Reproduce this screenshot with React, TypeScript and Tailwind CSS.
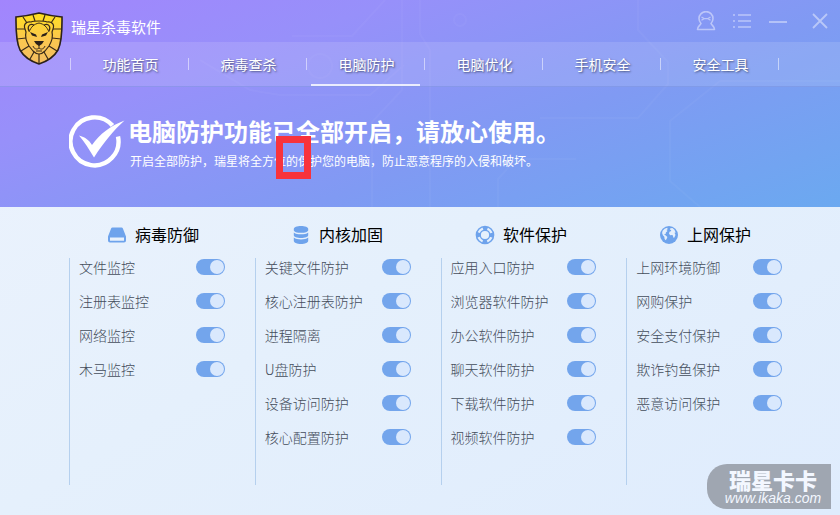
import type { ReactNode } from "react";

const navItems = ["功能首页", "病毒查杀", "电脑防护", "电脑优化", "手机安全", "安全工具"];
const activeItem = "电脑防护";

type Group = { title: string; icon: ReactNode; items: string[] };

function DriveIcon() {
  return (
    <svg viewBox="0 0 18 16" className="h-4 w-[18px]" fill="#6ea3ec" aria-hidden="true">
      <path
        fillRule="evenodd"
        d="M4.5 0.5h9a1.5 1.5 0 0 1 1.4 1L18 9.5v4a2 2 0 0 1-2 2H2a2 2 0 0 1-2-2v-4l3.1-8a1.5 1.5 0 0 1 1.4-1ZM2 10.6v3.2h14v-3.2Z"
      />
    </svg>
  );
}

function DatabaseIcon() {
  return (
    <svg viewBox="0 0 16 18" className="h-[18px] w-4" fill="#6ea3ec" aria-hidden="true">
      <path d="M.8 3C.8 1.200 4 0 8 0s7.200 1.200 7.200 3v1.200C15.200 5.800 12 6.800 8 6.800S.8 5.800.8 4.200Z" />
      <path d="M.8 6.400C2.500 7.800 5 8.300 8 8.300s5.500-.5 7.200-1.900v2.800c0 1.700-3.200 2.700-7.200 2.700S.8 10.900.8 9.200Z" />
      <path d="M.8 11.500c1.700 1.400 4.200 1.900 7.200 1.900s5.500-.5 7.200-1.900v3.200C15.200 16.600 12 18 8 18S.8 16.600.8 14.700Z" />
    </svg>
  );
}

function LifebuoyIcon() {
  return (
    <svg viewBox="0 0 20 20" className="size-5" fill="none" stroke="#6ea3ec" aria-hidden="true">
      <circle cx="10" cy="10" r="8.600" strokeWidth="1.500" />
      <circle cx="10" cy="10" r="4.800" strokeWidth="1.400" />
      <circle cx="10" cy="10" r="6.700" strokeWidth="3.600" strokeDasharray="4.600 5.924" strokeDashoffset="2.300" />
    </svg>
  );
}

function GlobeIcon() {
  return (
    <svg viewBox="0 0 18 18" className="size-[18px]" aria-hidden="true">
      <circle cx="9" cy="9" r="9" fill="#6ea3ec" />
      <g fill="#e4effc">
        <path d="M2.600 4.800 4.600 2.800l2.600-1 .5 1.400-1.200.8 1 1-1.600 1.400-.3 1.500-1.600.6 1.800 1.100 1.600 1.300-.8 2-1 1.300-1-1.200-.3-2.200-1.400-1.600-.8-2.200Z" />
        <path d="m10.400 2.200 2-.2 2 1.800 1.300 2.600-1.200.4 1 2.200-1.300 2.800-1-.4-.2-1.800-1.200-.6-1.500.3-1.300-1.600.5-2 1.700-.8-.2-1-1.200-.3Z" />
      </g>
    </svg>
  );
}

const groups: Group[] = [
  { title: "病毒防御", icon: <DriveIcon />, items: ["文件监控", "注册表监控", "网络监控", "木马监控"] },
  {
    title: "内核加固",
    icon: <DatabaseIcon />,
    items: ["关键文件防护", "核心注册表防护", "进程隔离", "U盘防护", "设备访问防护", "核心配置防护"],
  },
  {
    title: "软件保护",
    icon: <LifebuoyIcon />,
    items: ["应用入口防护", "浏览器软件防护", "办公软件防护", "聊天软件防护", "下载软件防护", "视频软件防护"],
  },
  {
    title: "上网保护",
    icon: <GlobeIcon />,
    items: ["上网环境防御", "网购保护", "安全支付保护", "欺诈钓鱼保护", "恶意访问保护"],
  },
];

function LionShield() {
  return (
    <svg viewBox="0 0 48 53" className="h-[53px] w-12" aria-hidden="true">
      <defs>
        <linearGradient id="gold" x1="0" y1="0" x2="0" y2="1">
          <stop offset="0" stopColor="#ffe01f" />
          <stop offset=".5" stopColor="#fbc84e" />
          <stop offset="1" stopColor="#f3bd63" />
        </linearGradient>
      </defs>
      <path
        d="M1 5Q12 4 24 1q12 3 23 4c.2 14 0 25-4 33-4 7-10 11-19 14C15 49 9 45 5 38 1 30 .8 19 1 5Z"
        fill="url(#gold)"
        stroke="#2b2118"
        strokeWidth="1.600"
      />
      <g fill="none" stroke="#3a2b18" strokeWidth="1.200" strokeLinejoin="round">
        <path d="M16 10c2-1 5-1 8-1s6 0 8 1c4-1 8 2 6 7l-1 3c1 4 0 9-3 14l-4 5c-2 2-4 3-6 3s-4-1-6-3l-4-5c-3-5-4-10-3-14l-1-3c-2-5 2-8 6-7Z" />
        <path d="M20 9 18 3M28 9l2-6M12 11 8 5M36 11l4-6M10 17H1M38 17h9M11 26l-9 1M37 26l9 1M14 34l-8 5M34 34l8 5M19 40l-4 7M29 40l4 7M24 42v9" />
        <path d="M19 13c-5-2-7 2-5 6M29 13c5-2 7 2 5 6" />
        <path d="M14 20c2-5 5-8 10-9 5 1 8 4 10 9" strokeWidth="1" />
        <path d="M24 33v3M18 34c1 3 4 4 6 2 2 2 5 1 6-2M21 39h6" strokeWidth="1" />
      </g>
      <path d="m15 20 6 2.500 1 2.500-5-1.500ZM33 20l-6 2.500-1 2.500 5-1.500ZM19 29h10l-2 3-3 2-3-2Z" fill="#2b2118" />
    </svg>
  );
}

function CheckBadge() {
  return (
    <svg viewBox="0 0 56 54" className="h-[54px] w-14 shrink-0" aria-hidden="true">
      <path d="M43.500 10.500A24 24 0 1 0 49 21.500" fill="none" stroke="#fff" strokeWidth="4.400" />
      <path d="M10 20.500c6 1.500 10 4.500 13 9.500 8-11 18-19 32.500-24.500C45 15 35 27 25 42.500 20 34 15.500 27 10 20.500Z" fill="#fff" />
    </svg>
  );
}

function CircuitLines() {
  return (
    <svg
      viewBox="0 0 840 207"
      preserveAspectRatio="xMidYMid slice"
      className="pointer-events-none absolute inset-0 size-full"
      fill="none"
      stroke="#fff"
      strokeOpacity=".035"
      strokeWidth="2"
      aria-hidden="true"
    >
      <path d="M402 0v90l-30 32v85M420 0v34l10 16v157M385 0 352 36h-60M638 0v30l30 32v22l-30 34H540M200 60l50 30 30 5h90l34-30M700 207l-30-26v-60l50-40h120M498 207v-28l18-20h60" />
      <circle cx="460" cy="20" r="6" />
      <circle cx="320" cy="66" r="12" />
    </svg>
  );
}

function WindowControls() {
  const button = "flex h-6 w-6 items-center justify-center text-white/45 hover:text-white";
  return (
    <div className="flex items-center gap-3">
      <button type="button" aria-label="用户" className={button}>
        <svg viewBox="0 0 20 20" className="size-5" fill="none" stroke="currentColor" strokeWidth="1.600">
          <path d="M5 12.500A7 7 0 1 1 15 12.500C16 14.500 18.500 15.500 18.500 18.500H1.500C1.500 15.500 4 14.500 5 12.500Z" strokeLinejoin="round" />
          <path d="M5.500 6 8 7.600h4L14.500 6M5.500 9.200 8 7.600M14.500 9.200 12 7.600" strokeWidth="1.300" />
        </svg>
      </button>
      <button type="button" aria-label="菜单" className={button}>
        <svg viewBox="0 0 20 16" className="h-4 w-5" fill="none" stroke="currentColor" strokeWidth="1.600">
          <path d="M1 2h2M6 2h13M1 8h2M6 8h13M1 14h2M6 14h13" />
        </svg>
      </button>
      <button type="button" aria-label="最小化" className={button}>
        <svg viewBox="0 0 20 20" className="size-5" stroke="currentColor" strokeWidth="1.800">
          <path d="M1 11h18" />
        </svg>
      </button>
      <button type="button" aria-label="关闭" className={`${button} ml-1.5`}>
        <svg viewBox="0 0 18 18" className="size-[18px]" stroke="currentColor" strokeWidth="1.800">
          <path d="m2 2 14 14M16 2 2 16" />
        </svg>
      </button>
    </div>
  );
}

function SwitchRow({ id, label }: { id: string; label: string }) {
  return (
    <li className="flex h-[34px] items-start justify-between">
      <label htmlFor={id} className="text-sm leading-[18px] font-light text-[#444d5b]">
        {label}
      </label>
      <input
        id={id}
        type="checkbox"
        defaultChecked
        className="relative mt-px h-4 w-[29px] shrink-0 appearance-none rounded-full bg-[#a9b8cc] before:absolute before:top-px before:left-px before:size-3.5 before:rounded-full before:bg-[#d9e8fd] checked:bg-[#73a5ec] checked:before:left-3.5"
      />
    </li>
  );
}

export default function App() {
  return (
    <div className="relative flex min-h-screen flex-col bg-linear-to-br from-[#edf3fd] via-[#e5f0fc] to-[#dfecfd] font-['Noto_Sans_CJK_SC',sans-serif]">
      <header className="relative h-[207px] bg-[linear-gradient(160deg,#a285fd_0%,#9790fa_28%,#809af3_62%,#6ba9f0_100%)] text-white">
        <CircuitLines />
        <div className="relative flex h-[42px] items-center justify-between pr-2 pl-[71px]">
          <span className="pt-3 text-[15px] leading-6">瑞星杀毒软件</span>
          <WindowControls />
        </div>
        <div className="absolute top-3 left-[15px] z-10">
          <LionShield />
        </div>
        <nav className="relative flex h-[45px] items-center border-b border-[#6f87d8]/40 bg-white/12 pr-[61px] pl-[70px]">
          {navItems.map((item) => (
            <div key={item} className="flex h-full flex-1 items-center">
              <span className="h-3 w-px bg-white/50" />
              <a
                href="#"
                aria-current={item === activeItem ? "page" : undefined}
                className={`mx-1 flex h-full flex-1 items-center justify-center border-b-2 pt-0.5 pl-0.5 text-sm [text-shadow:1px_1px_2px_rgba(50,60,90,0.8)] ${
                  item === activeItem ? "border-white/80" : "border-transparent"
                }`}
              >
                {item}
              </a>
            </div>
          ))}
          <span className="h-3 w-px bg-white/50" />
        </nav>
        <section className="relative flex items-start gap-[3px] pt-7 pl-[69px]">
          <CheckBadge />
          <div>
            <h1 className="text-2xl leading-8 font-bold">电脑防护功能已全部开启，请放心使用。</h1>
            <p className="pt-0.5 pl-0.5 text-xs leading-6">
              开启全部防护，瑞星将全方位的保护您的电脑，防止恶意程序的入侵和破坏。
            </p>
          </div>
        </section>
        <div className="absolute top-[136px] left-[276px] h-[43px] w-[35px] border-[7px] border-[#f8333c]" />
      </header>

      <main className="flex flex-1 flex-col pt-[15px] pb-[30px] pl-[69px]">
        <div className="grid grid-cols-4 pr-[35px]">
          {groups.map((group, g) => (
            <h2
              key={group.title}
              id={`group-${g}`}
              className="flex h-9 items-start gap-2 pl-[38px] text-base leading-6 text-black"
            >
              <span className="flex h-[26px] w-5 items-center justify-center">{group.icon}</span>
              {group.title}
            </h2>
          ))}
        </div>
        <div className="grid flex-1 grid-cols-4 pr-7">
          {groups.map((group, g) => (
            <ul
              key={group.title}
              aria-labelledby={`group-${g}`}
              className="border-l border-[#b5d0ee] pr-[30px] pl-[9px]"
            >
              {group.items.map((item, i) => (
                <SwitchRow key={item} id={`switch-${g}-${i}`} label={item} />
              ))}
            </ul>
          ))}
        </div>
      </main>

      <aside className="absolute right-[9px] bottom-1.5 flex h-[45px] w-[124px] flex-col items-center justify-between rounded-l-[20px] bg-[#9fa6b1] pt-[3px] pb-[7px] pl-2 text-[#f3f7ff]">
        <strong className="text-[22px] leading-6 font-black">瑞星卡卡</strong>
        <span className="font-['Liberation_Sans',sans-serif] text-sm leading-2 italic">www.ikaka.com</span>
      </aside>
    </div>
  );
}
